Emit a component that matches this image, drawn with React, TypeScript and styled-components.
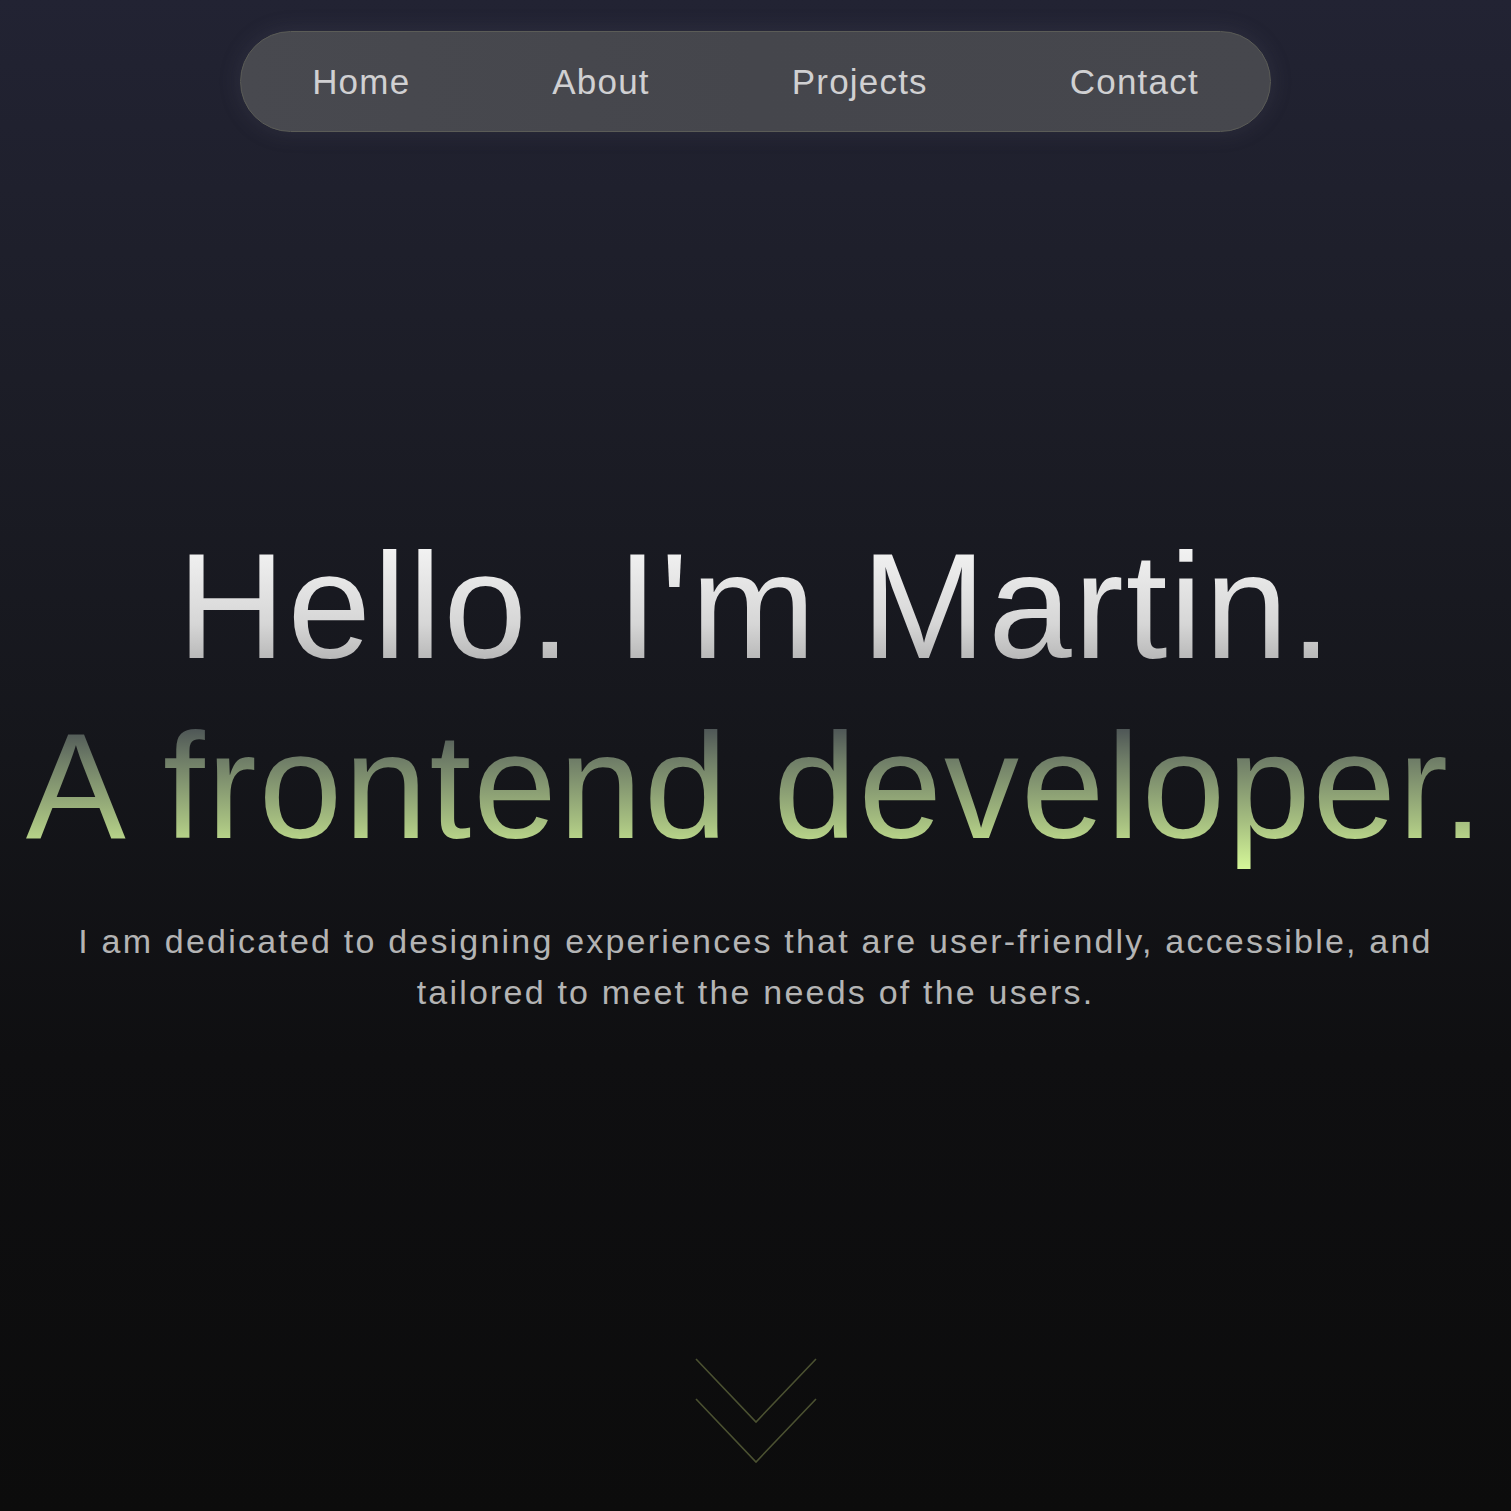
import styled, { createGlobalStyle } from "styled-components";

const GlobalStyle = createGlobalStyle`
  html, body {
    margin: 0;
    padding: 0;
    background: #0c0c0c;
  }
  body {
    font-family: "Liberation Sans", Arial, Helvetica, sans-serif;
  }
`;

const links = ["Home", "About", "Projects", "Contact"];

const App = () => {
  return (
    <>
      <GlobalStyle />
      <Page>
        <Nav>
          {links.map((l) => (
            <NavLink key={l} href={`#${l.toLowerCase()}`}>
              {l}
            </NavLink>
          ))}
        </Nav>
        <Hero>
          <Title>
            <Line>Hello. I'm Martin.</Line>
            <Line $accent>A frontend developer.</Line>
          </Title>
          <Intro>
            I am dedicated to designing experiences that are user-friendly,
            accessible, and tailored to meet the needs of the users.
          </Intro>
        </Hero>
        <ScrollDown aria-label="Scroll down">
          <svg width="122" height="106" viewBox="0 0 122 106" fill="none">
            <polyline
              points="1,1 61,64 121,1"
              stroke="#4b5131"
              strokeWidth="1.6"
            />
            <polyline
              points="1,41 61,104 121,41"
              stroke="#4b5131"
              strokeWidth="1.6"
            />
          </svg>
        </ScrollDown>
      </Page>
    </>
  );
};

export default App;

const Page = styled.div`
  min-height: 1511px;
  display: flex;
  flex-direction: column;
  align-items: center;
  padding-top: 31px;
  box-sizing: border-box;
  background: linear-gradient(
    180deg,
    #222333 0%,
    #1c1d27 25%,
    #15161b 50%,
    #0f0f11 70%,
    #0c0c0c 100%
  );
`;

const Nav = styled.nav`
  display: flex;
  align-items: center;
  height: 99px;
  border: 1px solid #5b5c57;
  border-radius: 999px;
  background: linear-gradient(90deg, #48494f 0%, #45464c 50%, #46474d 100%);
  box-shadow: 0 0 22px rgba(110, 112, 135, 0.18);
`;

const NavLink = styled.a`
  padding: 0 71px;
  font-size: 35px;
  letter-spacing: 1.2px;
  color: #d0d0d2;
  text-decoration: none;
`;

const Hero = styled.section`
  margin-top: 384px;
  display: flex;
  flex-direction: column;
  align-items: center;
  text-align: center;
`;

const Title = styled.h1`
  margin: 0;
  font-size: 150px;
  font-weight: 400;
  line-height: 180px;
  letter-spacing: 2px;
  display: flex;
  flex-direction: column;
  align-items: center;
`;

const Line = styled.span<{ $accent?: boolean }>`
  display: block;
  white-space: nowrap;
  background: ${(p) =>
    p.$accent
      ? "linear-gradient(180deg, #3f444e 10%, #6e7c67 35%, #a6bf80 70%, #dcff9c 100%)"
      : "linear-gradient(180deg, #f4f4f4 15%, #d6d6d6 60%, #a8a8a8 90%)"};
  -webkit-background-clip: text;
  background-clip: text;
  color: transparent;
`;

const Intro = styled.p`
  margin: 40px 0 0;
  max-width: 1400px;
  font-size: 34px;
  line-height: 51px;
  letter-spacing: 2.2px;
  color: #b4b4b4;
`;

const ScrollDown = styled.a`
  display: block;
  margin-top: auto;
  margin-bottom: 47px;
  line-height: 0;
`;
